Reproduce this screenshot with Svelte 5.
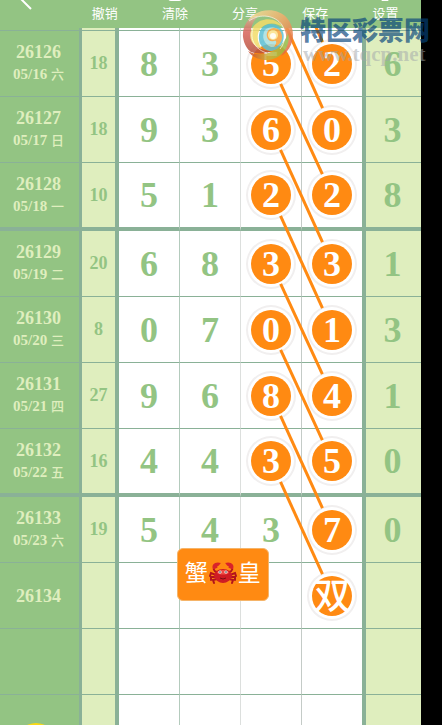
<script lang="ts">
  type Row = {
    issue: string;
    date?: string;
    day?: string;
    sum?: string;
    digits: string[];
    last?: string;
    marks: number[];
    thick?: boolean;
  };

  const rows: Row[] = [
    { issue: '26126', date: '05/16', day: '六', sum: '18', digits: ['8', '3', '5', '2'], last: '6', marks: [2, 3] },
    { issue: '26127', date: '05/17', day: '日', sum: '18', digits: ['9', '3', '6', '0'], last: '3', marks: [2, 3] },
    { issue: '26128', date: '05/18', day: '一', sum: '10', digits: ['5', '1', '2', '2'], last: '8', marks: [2, 3], thick: true },
    { issue: '26129', date: '05/19', day: '二', sum: '20', digits: ['6', '8', '3', '3'], last: '1', marks: [2, 3] },
    { issue: '26130', date: '05/20', day: '三', sum: '8', digits: ['0', '7', '0', '1'], last: '3', marks: [2, 3] },
    { issue: '26131', date: '05/21', day: '四', sum: '27', digits: ['9', '6', '8', '4'], last: '1', marks: [2, 3] },
    { issue: '26132', date: '05/22', day: '五', sum: '16', digits: ['4', '4', '3', '5'], last: '0', marks: [2, 3], thick: true },
    { issue: '26133', date: '05/23', day: '六', sum: '19', digits: ['5', '4', '3', '7'], last: '0', marks: [3] },
    { issue: '26134', digits: ['', '', '', '双'], marks: [3] },
    { issue: '', digits: ['', '', '', ''], marks: [] },
    { issue: '', digits: ['', '', '', ''], marks: [] }
  ];

  // row centres inside the chart, starting two rows above the first visible one
  const centres = [-101, -35, 35, 101, 167, 235, 301, 367, 433, 501, 567];
  const fromX = 271;
  const toX = 332;
  const radius = 23;

  // every trend line joins a ball to the one two rows below, edge to edge
  const lines = centres.slice(2).map((y2, i) => {
    const y1 = centres[i];
    const length = Math.hypot(toX - fromX, y2 - y1);
    const dx = ((toX - fromX) / length) * radius;
    const dy = ((y2 - y1) / length) * radius;
    return { x1: fromX + dx, y1: y1 + dy, x2: toX - dx, y2: y2 - dy };
  });
</script>

<main>
  <header>
    <button class="back" aria-label="返回">
      <svg width="24" height="24" viewBox="0 0 24 24"><path d="M15 21L4 10L15 -1" /></svg>
    </button>
    <button>
      <svg width="24" height="24" viewBox="0 0 24 24"><path d="M9 3L4 8l5 5M4 8h10a6 6 0 0 1 5 10l-1 4" /></svg>
      <span>撤销</span>
    </button>
    <button>
      <svg width="24" height="24" viewBox="0 0 24 24"><path d="M3 6h18M9 5V2h6v3M6 7v14a2 2 0 0 0 2 2h8a2 2 0 0 0 2-2V7" /></svg>
      <span>清除</span>
    </button>
    <button>
      <svg width="24" height="24" viewBox="0 0 24 24"><path d="M12 16V3M7 8l5-5 5 5M3 12v10h18V12" /></svg>
      <span>分享</span>
    </button>
    <button>
      <svg width="24" height="24" viewBox="0 0 24 24"><path d="M12 3v13M7 11l5 5 5-5M5 22h14" /></svg>
      <span>保存</span>
    </button>
    <button>
      <svg width="24" height="24" viewBox="0 0 24 24"><path d="M4 7l8-5 8 5v10l-8 6-8-6z" /><circle cx="12" cy="21" r="3" /></svg>
      <span>设置</span>
    </button>
  </header>

  <div class="chart">
    <table>
      <colgroup>
        <col class="c-issue" />
        <col class="c-sum" />
        <col class="c-digit" />
        <col class="c-digit" />
        <col class="c-digit" />
        <col class="c-fourth" />
        <col class="c-last" />
      </colgroup>
      <tbody>
        <tr class="edge">
          <td class="issue"></td>
          <td class="sum"></td>
          <td class="digit"></td>
          <td class="digit"></td>
          <td class="digit"></td>
          <td class="digit"></td>
          <td class="last"></td>
        </tr>
        {#each rows as row}
          <tr class:thick={row.thick}>
            <td class="issue">
              <strong>{row.issue}</strong>
              {#if row.date}
                <small>{row.date} <span>{row.day}</span></small>
              {/if}
            </td>
            <td class="sum">{row.sum ?? ''}</td>
            {#each row.digits as digit, i}
              <td class="digit">
                {#if row.marks.includes(i)}
                  <span class="ball" class:word={digit === '双'}>{digit}</span>
                {:else}
                  {digit}
                {/if}
              </td>
            {/each}
            <td class="last">{row.last ?? ''}</td>
          </tr>
        {/each}
      </tbody>
    </table>

    <svg class="trend" viewBox="0 0 421 729" preserveAspectRatio="none">
      {#each lines as line}
        <line x1={line.x1} y1={line.y1} x2={line.x2} y2={line.y2} />
      {/each}
    </svg>

    <div class="tip">
      <span>蟹</span>
      <svg width="28" height="24" viewBox="0 0 28 24">
        <g fill="none" stroke="#b3131b" stroke-width="2" stroke-linecap="round">
          <path d="M7 14L2 12L1 15M7 16L2 16L2 19M8 18L4 19L5 22M21 14L26 12L27 15M21 16L26 16L26 19M20 18L24 19L23 22" />
          <path d="M8 11C4 10 4 7 6 5M20 11C24 10 24 7 22 5" />
        </g>
        <path fill="#d9222a" d="M4 8C2 4 6 0 12 2C10 3 11 5 8 5C10 6 7 8 4 8zM24 8C26 4 22 0 16 2C18 3 17 5 20 5C18 6 21 8 24 8z" />
        <path fill="#cf1c24" d="M14 8C19 8 23 11 23 15C22 19 18 22 14 22C10 22 6 19 5 15C5 11 9 8 14 8z" />
        <path fill="#ef4a43" d="M14 9C18 9 20 11 20 12C17 14 11 14 8 12C8 11 10 9 14 9z" />
        <circle cx="11" cy="11" r="1.6" fill="#fff" />
        <circle cx="17" cy="11" r="1.6" fill="#fff" />
        <circle cx="11" cy="11" r="0.8" fill="#222" />
        <circle cx="17" cy="11" r="0.8" fill="#222" />
        <path d="M11 17Q14 19 17 17" fill="none" stroke="#7d0b12" />
      </svg>
      <span>皇</span>
    </div>
  </div>

  <button class="float" aria-label="更多"></button>

  <div class="brand">
    <svg width="54" height="54" viewBox="0 0 54 54">
      <defs>
        <linearGradient id="rim" x1="0" y1="0" x2="1" y2="1">
          <stop offset="0" stop-color="#f1e6a0" />
          <stop offset="0.5" stop-color="#f0a868" />
          <stop offset="1" stop-color="#dc5a35" />
        </linearGradient>
        <linearGradient id="leaf" x1="0" y1="0" x2="0" y2="1">
          <stop offset="0" stop-color="#dccfae" />
          <stop offset="0.5" stop-color="#d8635a" />
          <stop offset="1" stop-color="#b5523a" />
        </linearGradient>
        <linearGradient id="base" x1="0" y1="0" x2="1" y2="0">
          <stop offset="0" stop-color="#d2492c" />
          <stop offset="0.5" stop-color="#c9b43c" />
          <stop offset="1" stop-color="#8dbb48" />
        </linearGradient>
      </defs>
      <path fill="url(#leaf)" d="M25 3C10 5 1 16 2 29C3 36 6 41 10 44C20 47 27 45 30 43C18 42 10 36 10 27C9 16 15 8 25 3z" />
      <path fill="url(#rim)" d="M7 12C17 0 36 -1 46 10C56 22 53 41 40 48C46 38 48 25 40 16C32 7 18 6 7 12z" />
      <path fill="url(#base)" d="M7 43C17 49 31 46 39 38C43 34 46 29 47 25C50 38 41 51 27 52C18 52 11 49 7 43z" />
      <path fill="#f3dc6a" d="M12 19C20 8 36 9 43 20C35 14 26 14 20 20C15 26 16 34 21 41C10 38 6 28 12 19z" />
      <path fill="#5cc0d4" d="M20 21C26 13 38 15 42 24C45 33 38 43 29 43C19 41 15 31 20 21z" />
      <path fill="#a8dfdf" d="M24 22C29 17 38 19 40 26C42 34 36 40 30 39C23 36 20 29 24 22z" />
      <path fill="#f7a23a" d="M26 29C24 21 34 17 39 23C44 30 39 38 33 39C36 35 36 32 33 33C29 34 27 32 26 29z" />
      <circle cx="32" cy="27" r="5" fill="#fbe38a" />
      <circle cx="32" cy="28" r="3" fill="#fffdf0" />
      <path fill="none" stroke="#fff" stroke-width="1" opacity="0.7" d="M8 13C19 5 34 7 41 17C46 25 44 35 39 41M12 20C8 32 15 42 26 45" />
    </svg>
    <div class="brand-text">
      <span class="brand-name">特区彩票网</span>
      <span class="brand-url">www.tqcp.net</span>
    </div>
  </div>
</main>

<style>
  :global(body) {
    margin: 0;
    background: #000;
  }

  main {
    --green: #93c483;
    --pale: #dfeebe;
    --line: #8ab197;
    --orange: #ff8a12;
    position: relative;
    display: flex;
    flex-direction: column;
    box-sizing: border-box;
    height: 100vh;
    padding-right: 21px;
    overflow: hidden;
    font-family: 'Liberation Serif', 'Noto Sans CJK SC', serif;
  }

  header {
    display: grid;
    grid-template-columns: repeat(6, 1fr);
    flex: none;
    height: 28px;
    overflow: hidden;
    background: var(--green);
  }

  header button {
    display: flex;
    flex-direction: column;
    align-items: center;
    justify-content: flex-end;
    gap: 4px;
    height: 28px;
    padding: 0 1px 7px 0;
    border: 0;
    background: none;
    color: #fff;
    font: 13px/16px 'Noto Sans CJK SC', sans-serif;
  }

  header svg {
    flex: none;
    fill: none;
    stroke: #fff;
    stroke-width: 2;
  }

  header .back {
    align-items: flex-start;
    padding: 0 0 16px 16px;
  }

  .chart {
    position: relative;
    flex: 1;
    min-height: 0;
    overflow: hidden;
  }

  table {
    width: 100%;
    table-layout: fixed;
    border-spacing: 0;
    background: #fff;
  }

  .c-issue {
    width: 82px;
  }

  .c-sum {
    width: 37px;
  }

  .c-digit {
    width: 61px;
  }

  .c-fourth {
    width: 64px;
  }

  .c-last {
    width: 55px;
  }

  td {
    box-sizing: border-box;
    height: 66px;
    padding: 0;
    border-bottom: 1px solid var(--line);
    color: var(--green);
    font-weight: 700;
    text-align: center;
    vertical-align: middle;
  }

  .thick td {
    height: 68px;
    border-bottom-width: 4px;
  }

  .edge td {
    height: 3px;
  }

  .issue {
    border-right: 3px solid var(--line);
    background: var(--green);
    color: var(--pale);
  }

  .issue strong,
  .issue small {
    display: block;
    padding-right: 2px;
  }

  .issue strong {
    font-size: 18px;
    line-height: 22px;
  }

  .issue small {
    font-size: 15px;
    line-height: 22px;
  }

  .issue small span {
    font-size: 13px;
    font-weight: 500;
  }

  .sum {
    border-right: 4px solid var(--line);
    background: var(--pale);
    font-size: 18px;
  }

  .digit,
  .last {
    font-size: 36px;
    line-height: 40px;
  }

  .digit {
    border-right: 1px solid #b4cbbd;
  }

  .digit:nth-child(5) {
    border-right-color: #c4cbc7;
  }

  .digit:nth-child(4) {
    border-right-color: #dcdfdd;
  }

  .digit:nth-child(6) {
    border-right: 4px solid var(--line);
  }

  .last {
    padding-right: 2px;
    background: var(--pale);
  }

  .ball {
    display: block;
    box-sizing: border-box;
    width: 40px;
    height: 40px;
    margin: 0 auto;
    border-radius: 50%;
    background: var(--orange);
    box-shadow: 0 0 0 3px #fff, 0 0 0 5px #f1efef;
    color: #fff;
  }

  .word {
    display: flex;
    align-items: center;
    justify-content: center;
    padding-bottom: 6px;
    font-family: 'Noto Sans CJK SC', sans-serif;
    font-weight: 500;
  }

  .trend {
    position: absolute;
    top: 0;
    left: 0;
    width: 100%;
    height: 729px;
  }

  .trend line {
    stroke: var(--orange);
    stroke-width: 3;
    vector-effect: non-scaling-stroke;
  }

  .tip {
    position: absolute;
    top: 520px;
    left: 42%;
    display: flex;
    align-items: center;
    justify-content: center;
    gap: 1px;
    box-sizing: border-box;
    width: 92px;
    height: 53px;
    padding-bottom: 3px;
    border: 1px solid #f5b469;
    border-radius: 6px;
    background: var(--orange);
    color: #fff;
    font: 23px/28px 'Noto Sans CJK SC', sans-serif;
  }

  .tip span {
    padding-bottom: 4px;
  }

  .float {
    position: absolute;
    bottom: -38px;
    left: 16px;
    width: 40px;
    height: 40px;
    padding: 0;
    border: 0;
    border-radius: 50%;
    background: #fbd914;
  }

  .brand {
    position: absolute;
    top: 8px;
    right: 12px;
    display: flex;
    gap: 5px;
    pointer-events: none;
  }

  .brand > svg {
    opacity: 0.85;
  }

  .brand-text {
    display: flex;
    flex-direction: column;
    padding-top: 6px;
    white-space: nowrap;
  }

  .brand-name {
    color: rgba(4, 66, 122, 0.68);
    font: 900 26px/30px 'Noto Sans CJK SC', sans-serif;
  }

  .brand-url {
    padding-left: 3px;
    color: rgba(160, 165, 170, 0.5);
    font: 700 21px/20px 'Liberation Serif', serif;
  }
</style>
